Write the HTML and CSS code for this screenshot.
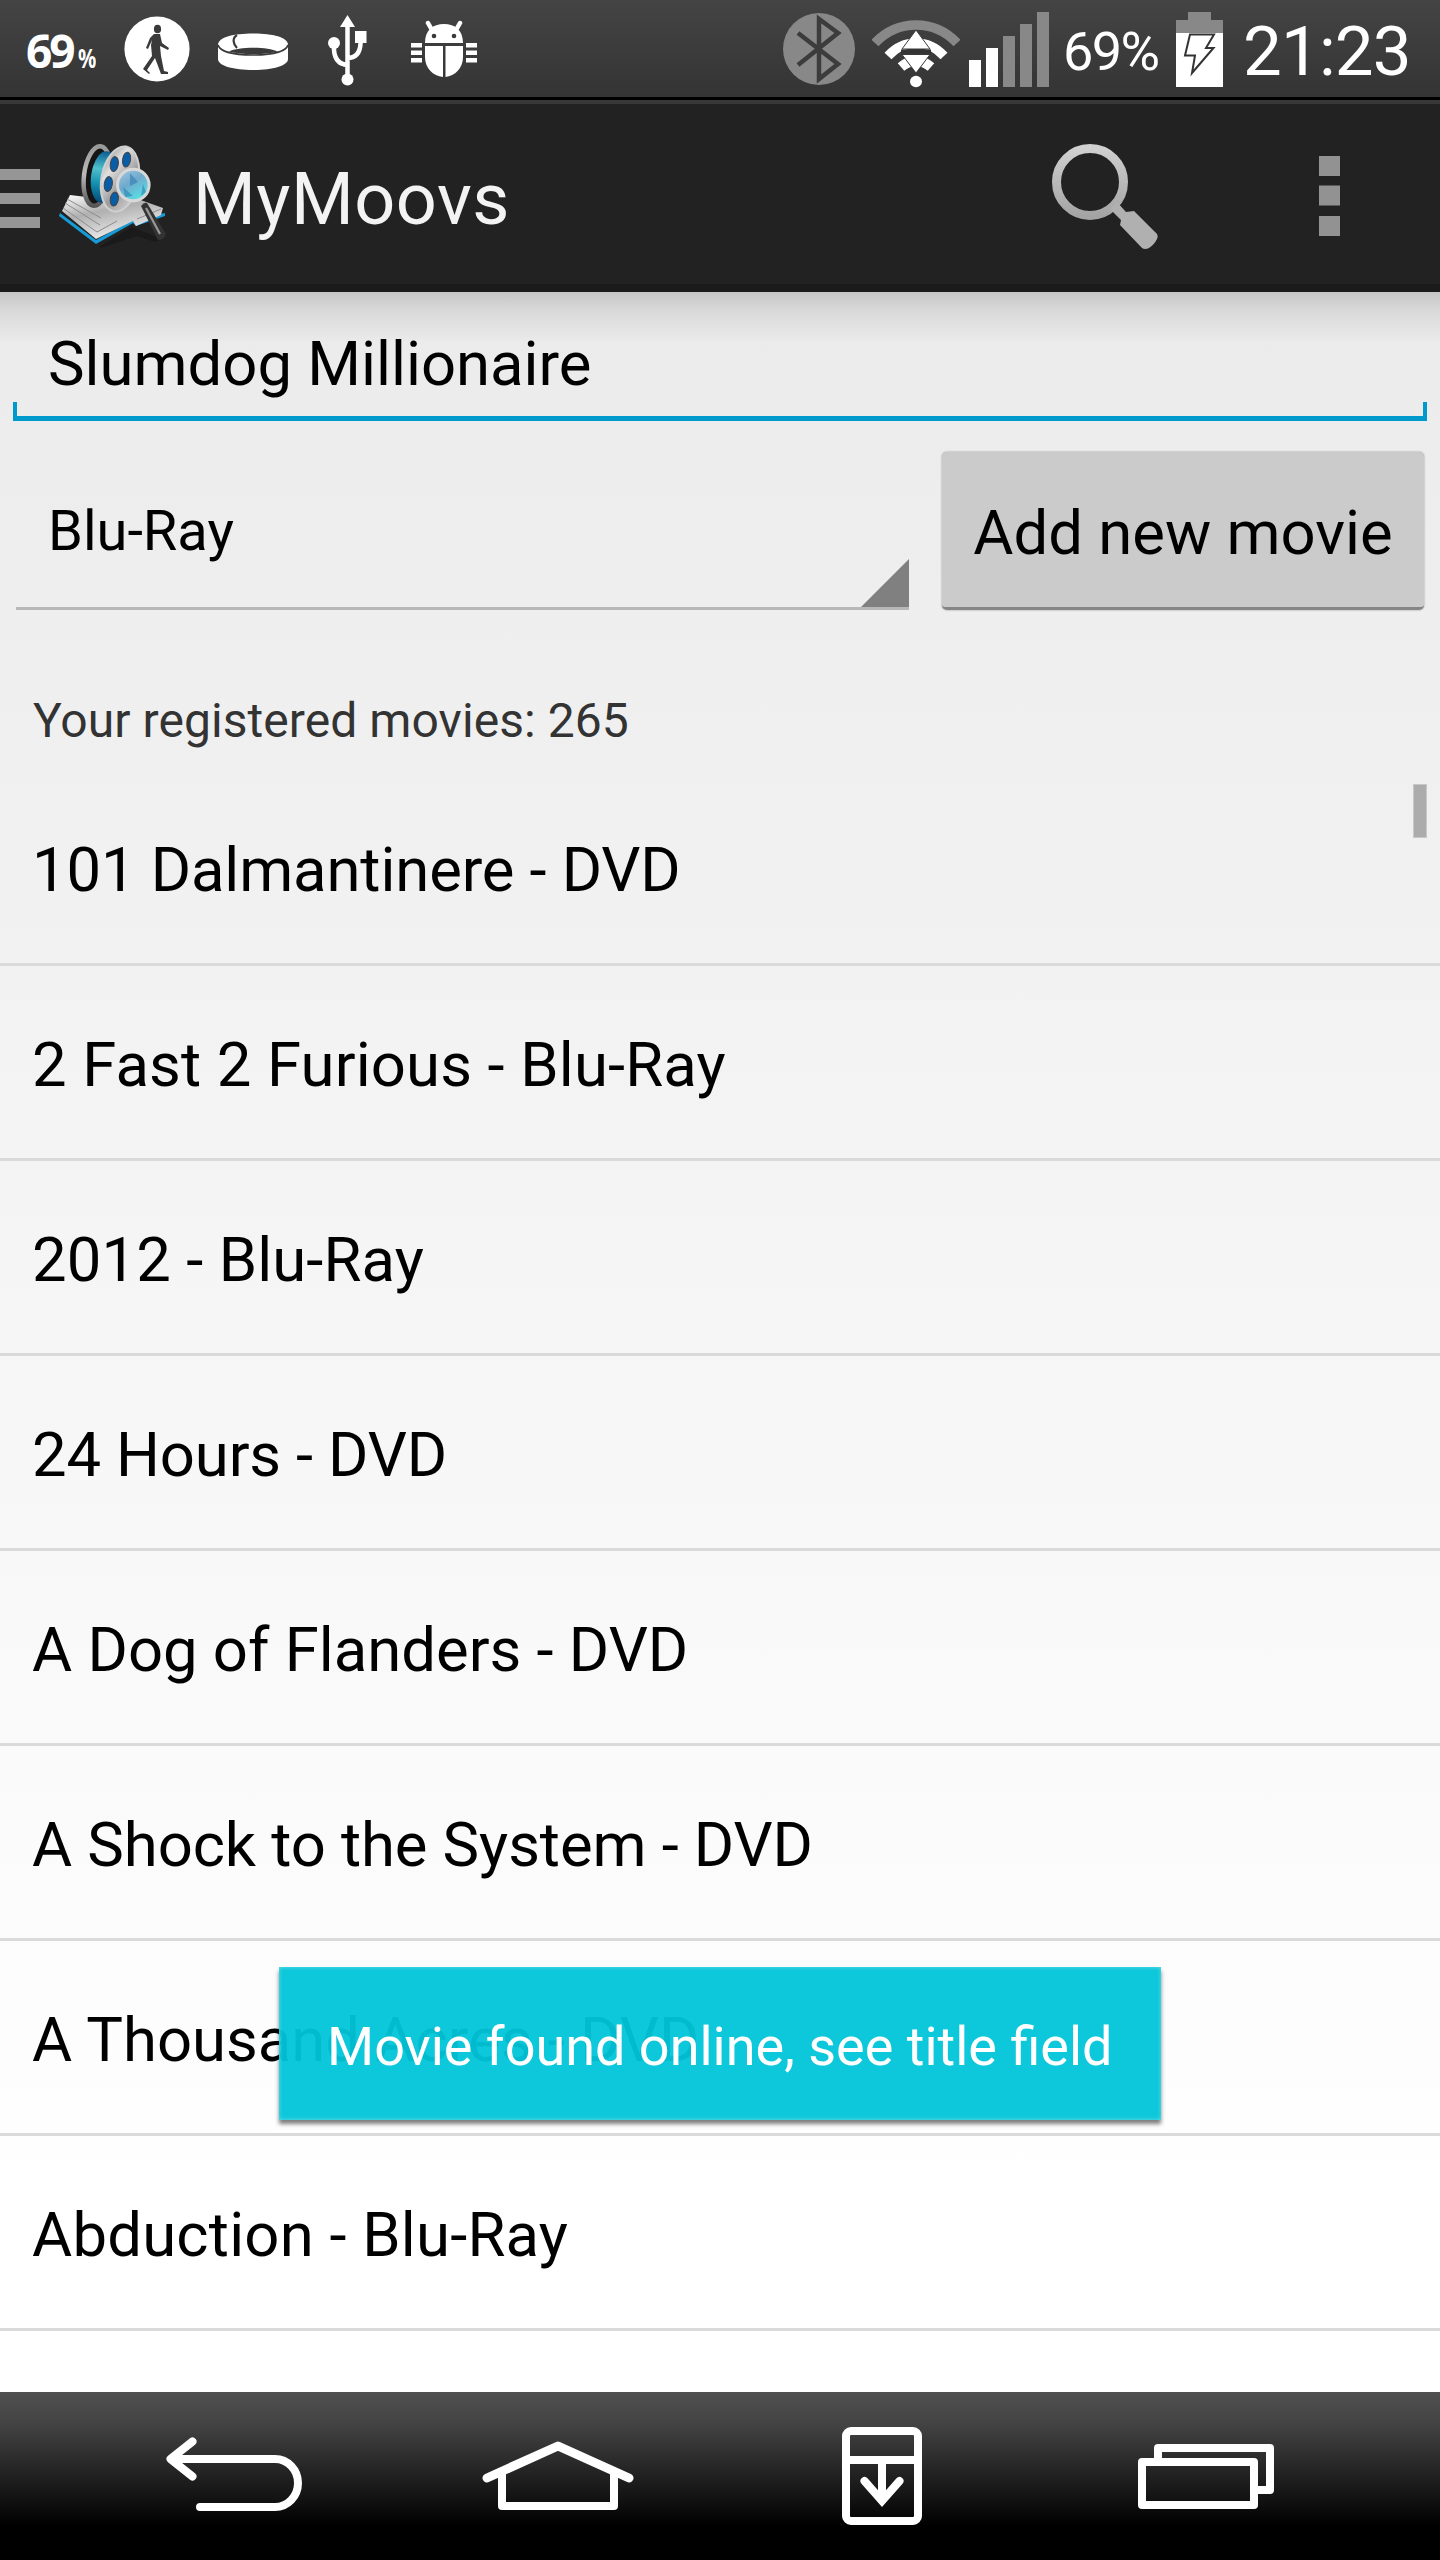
FILE: index.html
```html
<!DOCTYPE html>
<html lang="en">
<head>
<meta charset="utf-8">
<title>MyMoovs</title>
<link rel="stylesheet" href="styles.css">
</head>
<body>
<div class="screen">
  <div class="status">
    <div class="notices">
      <span class="temp">69<small>%</small></span>
      <svg class="n-walk" width="66" height="66" viewBox="0 0 66 66"><circle cx="33" cy="33" r="32.6" fill="#fff"/><g fill="#3a3a3a"><ellipse cx="33.500" cy="13" rx="3.600" ry="4.300"/><path d="M30 18h6l2 9 7 5-1 2-8-4 1 10 3 15 4 1v2h-7l-6-16-8 12 3 3-1 1-6-5 9-13-1-11 1-5-4 9-2-1 4-10z"/></g></svg>
      <svg class="n-ring" width="72" height="38" viewBox="0 0 72 38"><path d="M1 12C1 4 17 .5 36 .5S71 4 71 12v14c0 7-16 11-35 11S1 33 1 26z" fill="#fff"/><path d="M1 12c2 7 17 10 35 10s33-3 35-10" fill="none" stroke="#3a3a3a" stroke-width="1.600"/><path d="M12 18.500c10-5 38-5 49 0-12 3.500-37 3.500-49 0z" fill="#3a3a3a"/><path d="M20 2c-5 3-4 9 0 13" fill="none" stroke="#3a3a3a" stroke-width="2.200"/></svg>
      <svg class="n-usb" width="40" height="72" viewBox="0 0 40 72"><g fill="none" stroke="#fff" stroke-width="4.500"><path d="M19.500 8v56M6 28v8q1 14 13.500 15M32.500 22v8q-1 14-13 14"/></g><path d="M19.500 1l7.500 12H12z" fill="#fff"/><circle cx="6" cy="29" r="6" fill="#fff"/><path d="M27 17h11.500v12H27z" fill="#fff"/><circle cx="19.500" cy="65.500" r="6" fill="#fff"/></svg>
      <svg class="n-bug" width="66" height="58" viewBox="0 0 66 58"><g fill="#fff"><path d="M14 23C14 10 22 4 33 4s19 6 19 19zM14 26h18v31C22 56 14 48 14 37zM34.500 26H52v11c0 11-8 19-17.500 20zM0 23h11v4.500H0zM0 30.500h11V35H0zM0 38h11v4.500H0zM55 23h11v4.500H55zM55 30.500h11V35H55zM55 38h11v4.500H55z"/></g><path d="M21 10l-4-7M45 10l4-7" stroke="#fff" stroke-width="4.500" stroke-linecap="round"/><circle cx="23" cy="16" r="2.300" fill="#3a3a3a"/><circle cx="43" cy="16" r="2.300" fill="#3a3a3a"/></svg>
    </div>
    <div class="system">
      <svg class="s-bt" width="72" height="72" viewBox="0 0 72 72"><circle cx="36" cy="36" r="36" fill="#888"/><path d="M15 20l40 31-19 15V6l19 14-40 32" fill="none" stroke="#3c3c3c" stroke-width="4.500"/></svg>
      <svg class="s-wifi" width="88" height="68" viewBox="0 0 88 68"><g fill="none"><path d="M3 23Q20 5 44 5t41 18" stroke="#888" stroke-width="9.500"/><path d="M16 36q12-13 28-13t28 13" stroke="#fff" stroke-width="9.500"/><path d="M29 47q7-6 15-6t15 6" stroke="#fff" stroke-width="10"/></g><path d="M44 10l14 19H30zM30 34.500h28L44 53z" fill="#fff" stroke="#3a3a3a" stroke-width="1"/><path d="M29 29.500h30v4H29z" fill="#333"/><ellipse cx="44" cy="61.500" rx="6" ry="5.700" fill="#fff"/></svg>
      <svg class="s-cell" width="80" height="75" viewBox="0 0 80 75"><path d="M0 48h12v27H0zM17 36h12v39H17z" fill="#fff"/><path d="M34 24h12v51H34zM51 12h12v63H51zM68 0h12v75H68z" fill="#888"/></svg>
      <span class="pct">69%</span>
      <svg class="s-batt" width="47" height="75" viewBox="0 0 47 75"><path d="M12 0h23v8h12v13H0V8h12z" fill="#888"/><path d="M0 21h47v54H0z" fill="#fff"/><path d="M14 22.500h24L30 36h7.500L16 61l3-17.500H9z" fill="#fff" stroke="#333" stroke-width="2"/></svg>
      <span class="clock">21:23</span>
    </div>
  </div>
  <div class="actionbar">
    <svg class="drawer" width="40" height="60" viewBox="0 0 40 60"><path d="M0 0h40v11H0zM0 24h40v11H0zM0 48h40v11H0z" fill="#969696"/></svg>
    <svg class="logo" width="108" height="108" viewBox="0 0 108 108">
      <defs>
        <linearGradient id="metal" x1="0" y1="0" x2="1" y2="1"><stop offset="0" stop-color="#8a8a8a"/><stop offset=".3" stop-color="#e0e0e0"/><stop offset=".6" stop-color="#9c9c9c"/><stop offset="1" stop-color="#ddd"/></linearGradient>
        <linearGradient id="rim" x1="0" y1="0" x2="0" y2="1"><stop offset="0" stop-color="#999"/><stop offset=".5" stop-color="#bbb"/><stop offset="1" stop-color="#555"/></linearGradient>
        <linearGradient id="film" x1="0" y1="0" x2="0" y2="1"><stop offset="0" stop-color="#075c8f"/><stop offset=".35" stop-color="#4fbfcd"/><stop offset=".65" stop-color="#148fae"/><stop offset="1" stop-color="#064a7c"/></linearGradient>
        <linearGradient id="glass" x1="0" y1="0" x2=".6" y2="1"><stop offset="0" stop-color="#a9cbe2"/><stop offset=".5" stop-color="#6fa9cd"/><stop offset="1" stop-color="#58e0e6"/></linearGradient>
        <linearGradient id="page" x1="0" y1="0" x2=".5" y2="1"><stop offset="0" stop-color="#fff"/><stop offset=".45" stop-color="#b0b0b0"/><stop offset="1" stop-color="#eee"/></linearGradient>
      </defs>
      <path d="M40 105l32-20 32 12-8 3-18-6-36 12z" fill="#151515" opacity=".6"/>
      <path d="M1 71l36 27 37-20 32-7v3l-29 10-3-3-37 21L0 74z" fill="#179bd6"/>
      <path d="M11 53l25 3h40l28 10-2 7-25 11-3-5-37 18L3 69z" fill="url(#page)"/>
      <path d="M4 66l34 24 20-11M6 61l35 22M8 57l34 19M78 77l24-10" fill="none" stroke="#8c8c8c" stroke-width="1"/>
      <ellipse cx="38" cy="34" rx="13" ry="30" fill="#151515" stroke="url(#rim)" stroke-width="4.500" transform="rotate(7 38 34)"/>
      <ellipse cx="45" cy="35" rx="13" ry="26" fill="url(#film)" transform="rotate(7 45 35)"/>
      <ellipse cx="61" cy="37" rx="18.500" ry="33" fill="url(#metal)" stroke="#d0d0d0" stroke-width="2" transform="rotate(11 61 37)"/>
      <g fill="#075da8" stroke="#444" stroke-width="1"><ellipse cx="55.300" cy="22" rx="4" ry="7.500" transform="rotate(9 55 22)"/><ellipse cx="67.700" cy="17.500" rx="4" ry="7.500" transform="rotate(9 67 17)"/><ellipse cx="49.300" cy="42" rx="4" ry="7.500" transform="rotate(9 49 42)"/><ellipse cx="55.300" cy="57" rx="4" ry="7" transform="rotate(9 55 57)"/></g>
      <path d="M82 64q3-4 6-3l19 31q-2 6-8 6z" fill="#333"/><path d="M87 66l14 26" stroke="#999" stroke-width="2.200"/>
      <circle cx="74.300" cy="43" r="15.800" fill="url(#glass)" stroke="#d8d8d8" stroke-width="3"/>
      <path d="M71 31l8 9-8 4zM64 45l10 9-8 1zM84 42l3 8-5 4z" fill="#2a78ae" opacity=".55"/>
    </svg>
    <h1 class="title">MyMoovs</h1>
    <svg class="search" width="108" height="108" viewBox="0 0 108 108"><defs><linearGradient id="lens" x1="0" y1="0" x2="0" y2="1"><stop offset="0" stop-color="#d0d0d0"/><stop offset="1" stop-color="#a4a4a4"/></linearGradient></defs><circle cx="39" cy="38" r="33.500" fill="none" stroke="url(#lens)" stroke-width="9"/><path d="M59 65l7-7 9 10 8-1 21 21q4 3 2 7-3 6-8 9-4 2-7 0L69 81l1-5z" fill="#b0b0b0"/></svg>
    <svg class="more" width="21" height="81" viewBox="0 0 21 81"><path d="M0 0h21v20H0zM0 29.500h21v20H0zM0 60h21v20H0z" fill="#929292"/></svg>
  </div>
  <div class="content">
    <div class="field"><span class="t-field">Slumdog Millionaire</span></div>
    <div class="form">
      <div class="spinner"><span class="t-spin">Blu-Ray</span><svg class="arrow" width="48" height="48" viewBox="0 0 48 48"><path d="M48 0v48H0z" fill="#808080"/></svg></div>
      <div class="button"><span class="t-btn">Add new movie</span></div>
    </div>
    <div class="count"><span class="t-count">Your registered movies: 265</span></div>
    <ul class="list">
      <li>101 Dalmantinere - DVD</li>
      <li>2 Fast 2 Furious - Blu-Ray</li>
      <li>2012 - Blu-Ray</li>
      <li>24 Hours - DVD</li>
      <li>A Dog of Flanders - DVD</li>
      <li>A Shock to the System - DVD</li>
      <li>A Thousand Acres - DVD</li>
      <li>Abduction - Blu-Ray</li>
    </ul>
    <div class="scrollbar"></div>
  </div>
  <div class="nav">
    <svg class="v-back" width="138" height="84" viewBox="0 0 138 84"><path d="M26.500 11.500L4.500 29l22 17.500" fill="none" stroke="#fff" stroke-width="8" stroke-linecap="round" stroke-linejoin="round"/><path d="M7 29h102a23 24 0 0 1 0 48H34" fill="none" stroke="#fff" stroke-width="8" stroke-linecap="round"/></svg>
    <svg class="v-home" width="152" height="72" viewBox="0 0 152 72"><path d="M5 37L76 5l71 32" fill="none" stroke="#fff" stroke-width="9" stroke-linecap="round" stroke-linejoin="round"/><path d="M20 32v33h112V32" fill="none" stroke="#fff" stroke-width="8" stroke-linejoin="round"/></svg>
    <svg class="v-drop" width="80" height="98" viewBox="0 0 80 98"><rect x="4" y="4" width="72" height="90" rx="5" fill="none" stroke="#fff" stroke-width="8"/><path d="M4 33h72M40 33v40" stroke="#fff" stroke-width="8"/><path d="M22.500 54L40 74l17.500-20" fill="none" stroke="#fff" stroke-width="8" stroke-linecap="round"/></svg>
    <svg class="v-recent" width="136" height="66" viewBox="0 0 136 66"><g fill="none" stroke="#fff" stroke-width="8" stroke-linejoin="round"><path d="M20 16V4h112v42h-16"/><path d="M4 18h112v43H4z"/></g></svg>
  </div>
  <div class="toast"><span class="t-toast">Movie found online, see title field</span></div>
</div>
</body>
</html>
```
FILE: styles.css
```css
* { box-sizing: border-box; }
body { margin: 0; font-family: Roboto, "Noto Sans", sans-serif; color: #000; }
svg { display: block; flex: none; }
span, h1, li { white-space: nowrap; }
.screen { position: relative; width: 1440px; height: 2560px; overflow: hidden; display: flex; flex-direction: column; }

.status { height: 100px; flex: none; display: flex; justify-content: space-between; background: linear-gradient(#444, #343434); border-bottom: 3px solid #000; color: #fff; }
.notices, .system { display: flex; align-items: flex-start; }
.temp { width: 97px; padding: 23px 0 0 26px; font: bold 46px/54px "Noto Sans", sans-serif; letter-spacing: -3px; }
.temp small { font-size: 26px; margin-left: 5px; font-family: "Noto Sans", sans-serif; display: inline-block; transform: scale(.78, 1); transform-origin: 0 100%; }
.n-walk { margin: 16px 0 0 27px; }
.n-ring { margin: 33px 0 0 27px; }
.n-usb { margin: 14px 0 0 39px; }
.n-bug { margin: 20px 0 0 43px; }
.s-bt { margin-top: 13px; }
.s-wifi { margin: 20px 0 0 17px; }
.s-cell { margin: 12px 0 0 9px; }
.pct { width: 96px; margin: 20px 0 0 14px; font-size: 54px; line-height: 64px; letter-spacing: -1.600px; }
.s-batt { margin: 12px 0 0 17px; }
.clock { width: 197px; margin: 10px 0 0 20px; font-size: 69px; line-height: 84px; letter-spacing: -0.800px; }

.actionbar { height: 192px; flex: none; display: flex; align-items: flex-start; background: #222; border-top: 4px solid #383838; border-bottom: 8px solid #1b1b1b; }
.drawer { margin-top: 65px; }
.logo { margin: 38px 0 0 19px; }
.title { margin: 54px 0 0 26px; width: 858px; font-size: 72px; line-height: 84px; font-weight: 400; color: #f3f3f3; letter-spacing: 0.500px; }
.search { margin-top: 40px; }
.more { margin: 52px 0 0 160px; }

.content { position: relative; flex: 1; background: linear-gradient(rgba(0,0,0,.16), rgba(0,0,0,.08) 18px, rgba(0,0,0,0) 52px), linear-gradient(#ebebeb, #fff 92%); }
.field { height: 129px; margin: 0 13px; padding: 34px 0 0 35px; border-bottom: 5px solid #0099cc; position: relative; font-size: 61.600px; line-height: 76px; }
.field::before, .field::after { content: ""; position: absolute; bottom: 0; width: 4px; height: 14px; background: #0099cc; }
.field::before { left: 0; }
.field::after { right: 0; }
.form { display: flex; height: 191px; padding: 31px 16px 0 16px; justify-content: space-between; }
.spinner { width: 893px; height: 158px; padding-left: 32px; display: flex; justify-content: space-between; align-items: flex-end; border-bottom: 3px solid #b8b8b8; font-size: 56px; }
.t-spin { line-height: 66px; margin-bottom: 43px; }
.button { width: 482px; height: 158px; padding-top: 43px; text-align: center; background: #cbcbcb; border-radius: 5px; border-bottom: 3px solid #858585; box-shadow: 0 0 2px #888; font-size: 61.600px; line-height: 76px; }
.count { padding: 81px 0 0 33px; height: 159px; font-size: 48px; line-height: 56px; color: #333; letter-spacing: 0.060px; }
.list { list-style: none; margin: 0; padding: 0; }
.list li { height: 195px; padding: 61px 0 0 32px; font-size: 61.600px; line-height: 76px; border-bottom: 3px solid #dadada; }
.list li:nth-child(1) { letter-spacing: -0.120px; }
.list li:nth-child(2) { letter-spacing: 0.160px; }
.list li:nth-child(3) { letter-spacing: 0.100px; }
.list li:nth-child(4) { letter-spacing: -0.150px; }
.list li:nth-child(6) { letter-spacing: -0.080px; }
.list li:nth-child(8) { letter-spacing: 0.220px; }
.scrollbar { position: absolute; right: 13px; top: 492px; width: 14px; height: 54px; background: #acacac; border: 1px solid #c8c8c8; }

.toast { position: absolute; left: 279px; top: 1967px; width: 882px; height: 153px; padding: 47px 0 0 48px; background: rgba(0,196,217,.95); box-shadow: 0 4px 4px rgba(0,0,0,.5), inset 0 0 4px rgba(255,255,255,.4); color: #fff; font-size: 54px; line-height: 66px; }

.nav { height: 168px; flex: none; display: flex; align-items: flex-start; background: linear-gradient(#505050, #444 18%, #000 80%); }
.v-back { margin: 38px 0 0 166px; }
.v-home { margin: 49px 0 0 178px; }
.v-drop { margin: 35px 0 0 208px; }
.v-recent { margin: 52px 0 0 216px; }
```
